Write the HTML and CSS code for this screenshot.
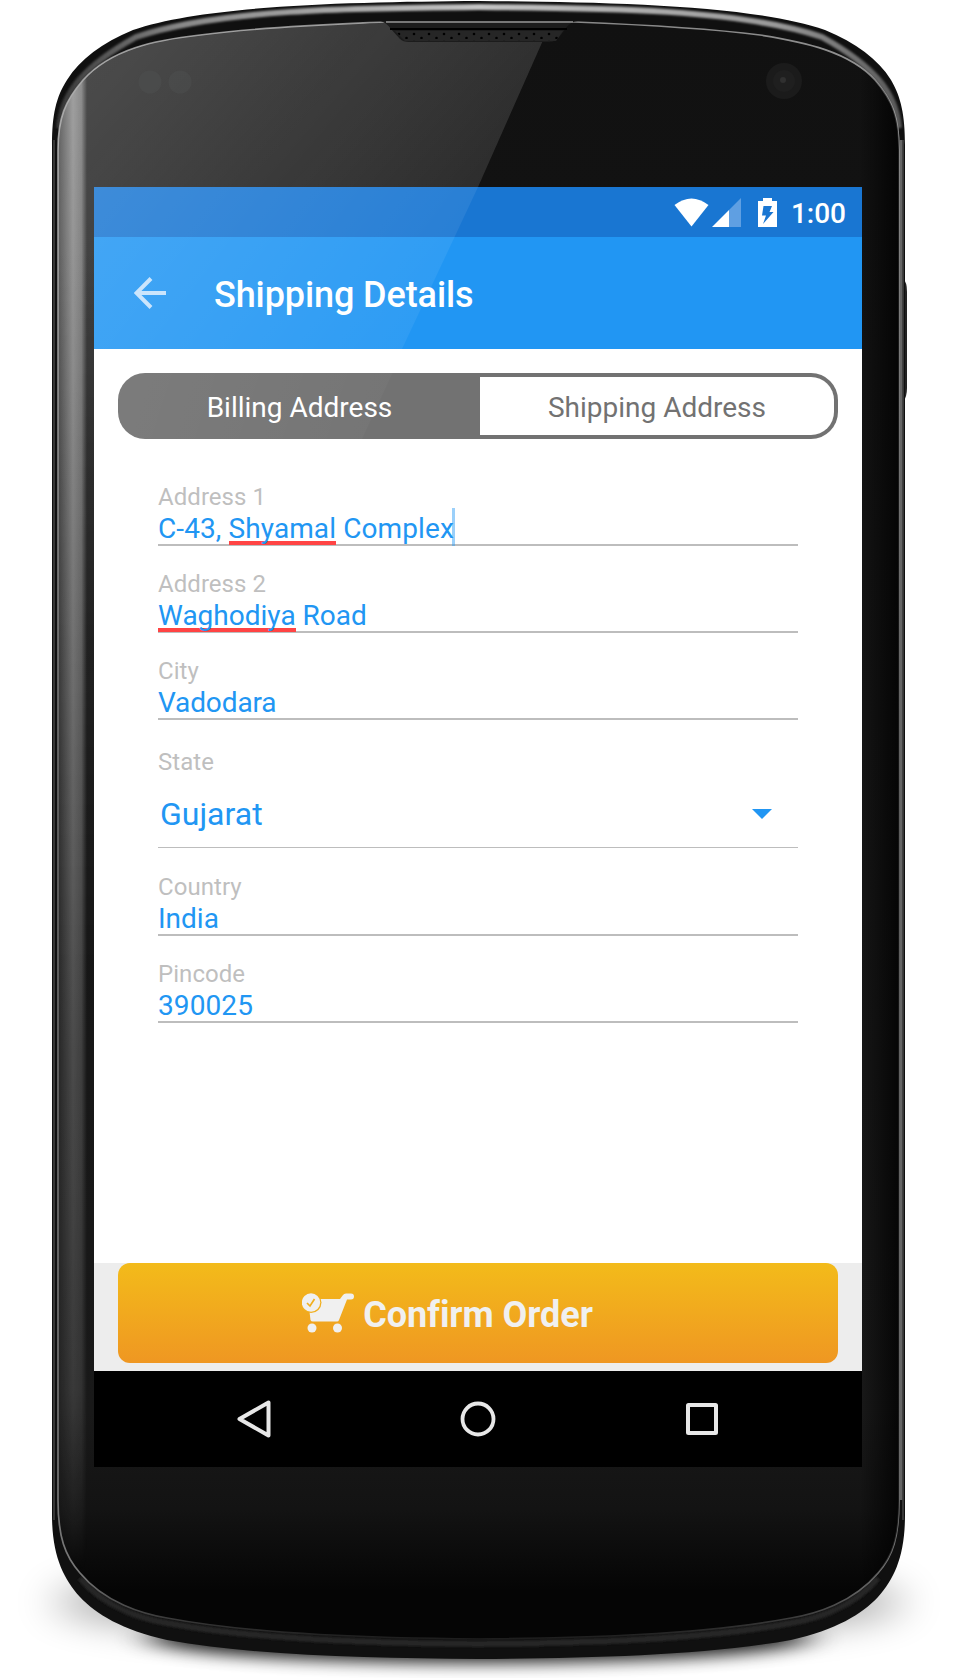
FILE: index.html
```html
<!DOCTYPE html>
<html lang="en">
<head>
<meta charset="utf-8">
<title>Shipping Details</title>
<link rel="stylesheet" href="styles.css">
</head>
<body>
<div class="device">
  <svg class="device-body" viewBox="0 0 958 1678" aria-hidden="true">
    <defs>
      <linearGradient id="face" x1="0" y1="0" x2="0" y2="1">
        <stop offset="0" stop-color="#111"/><stop offset=".86" stop-color="#191919"/><stop offset=".92" stop-color="#131313"/><stop offset=".97" stop-color="#050505"/>
      </linearGradient>
      <linearGradient id="gloss" gradientUnits="userSpaceOnUse" x1="90" y1="40" x2="430" y2="330">
        <stop offset="0" stop-color="#fff" stop-opacity=".25"/><stop offset="1" stop-color="#fff" stop-opacity=".1"/>
      </linearGradient>
      <linearGradient id="railX" x1="0" y1="0" x2="1" y2="0">
        <stop offset="0" stop-color="#aaa" stop-opacity=".3"/><stop offset=".5" stop-color="#aaa" stop-opacity=".9"/><stop offset=".8" stop-color="#aaa" stop-opacity=".7"/><stop offset="1" stop-color="#aaa" stop-opacity="0"/>
      </linearGradient>
      <linearGradient id="fadeY" gradientUnits="userSpaceOnUse" x1="0" y1="70" x2="0" y2="1570">
        <stop offset="0" stop-color="#fff"/><stop offset=".3" stop-color="#bbb"/><stop offset=".65" stop-color="#666"/><stop offset=".88" stop-color="#404040"/><stop offset="1" stop-color="#000"/>
      </linearGradient>
      <linearGradient id="glossFade" gradientUnits="userSpaceOnUse" x1="0" y1="250" x2="0" y2="1000">
        <stop offset="0" stop-color="#fff"/><stop offset="1" stop-color="#000"/>
      </linearGradient>
      <mask id="railMask"><rect width="958" height="1678" fill="url(#fadeY)"/></mask>
      <mask id="glossMask"><rect width="958" height="1678" fill="url(#glossFade)"/></mask>
      <linearGradient id="edge" gradientUnits="userSpaceOnUse" x1="52" y1="0" x2="905" y2="0">
        <stop offset="0" stop-color="#333"/><stop offset=".15" stop-color="#888"/><stop offset=".5" stop-color="#c4c4c4"/><stop offset=".85" stop-color="#999"/><stop offset="1" stop-color="#555"/>
      </linearGradient>
      <linearGradient id="rightShade" gradientUnits="userSpaceOnUse" x1="860" y1="0" x2="900" y2="0">
        <stop offset="0" stop-color="#000" stop-opacity="0"/><stop offset="1" stop-color="#000" stop-opacity=".8"/>
      </linearGradient>
      <linearGradient id="rim" gradientUnits="userSpaceOnUse" x1="0" y1="20" x2="0" y2="1640">
        <stop offset="0" stop-color="#888"/><stop offset=".05" stop-color="#999"/><stop offset=".5" stop-color="#666"/><stop offset=".96" stop-color="#777"/><stop offset="1" stop-color="#1c1c1c"/>
      </linearGradient>
      <pattern id="mesh" width="15" height="8" patternUnits="userSpaceOnUse" x="395" y="31">
        <circle cx="4" cy="3" r="1.3"/><circle cx="11.500" cy="7" r="1.3"/>
      </pattern>
      <filter id="soft" x="-20%" y="-100%" width="140%" height="300%"><feGaussianBlur stdDeviation="18 8"/></filter>
      <filter id="wide" x="-20%" y="-60%" width="140%" height="220%"><feGaussianBlur stdDeviation="22 18"/></filter>
      <filter id="blur2" filterUnits="userSpaceOnUse" x="0" y="0" width="958" height="1678"><feGaussianBlur stdDeviation="1.200"/></filter>
      <path id="bodyShape" d="M52 145C52 115 56 97 67 80C80 59 102 43 133 30C205 5 350 2 479 1C608 2 753 5 825 30C856 43 878 59 891 80C901 97 905 115 905 145V1515C905 1555 895 1578 878 1597C862 1614 836 1630 791 1640C700 1656 590 1658 479 1659C368 1658 258 1656 167 1640C122 1630 96 1614 80 1597C63 1578 52 1555 52 1515Z"/>
      <path id="faceShape" d="M58 150C58 118 65 101 83 80C111 49 155 40 200 35C270 26 340 24 383 22H575C625 24 705 28 760 35C805 42 850 52 875 80C893 101 899 118 899 150V1500C899 1537 893 1556 878 1573C853 1603 815 1614 791 1618C700 1635 580 1638 479 1639C378 1638 258 1635 167 1618C143 1614 105 1603 80 1573C65 1556 58 1537 58 1500Z"/>
      <clipPath id="bodyClip"><use href="#bodyShape"/></clipPath>
      <clipPath id="faceClip"><use href="#faceShape"/></clipPath>
    </defs>
    <ellipse cx="479" cy="1602" rx="425" ry="38" fill="#000" opacity=".34" filter="url(#wide)"/>
    <ellipse cx="479" cy="1638" rx="330" ry="25" fill="#000" opacity=".85" filter="url(#soft)"/>
    <path d="M903 278Q907 282 907 292V388Q907 397 903 402Z" fill="#222"/>
    <use href="#bodyShape" fill="#101010"/>
    <g clip-path="url(#bodyClip)">
      <path d="M59 128C62 94 82 67 136 37C220 9 350 8 479 7C608 8 738 9 822 37C876 67 896 94 899 128" fill="none" stroke="url(#edge)" stroke-width="6" filter="url(#blur2)"/>
      <path d="M54 140V1520M903 140V1520" fill="none" stroke="#444" stroke-width="1.500"/>
      <path d="M901 140V1500" stroke="#666" stroke-width="2.500"/>
      <path d="M80 1573C105 1603 143 1614 167 1618C258 1635 378 1638 479 1639C580 1638 700 1635 791 1618C815 1614 853 1603 878 1573" transform="translate(0 5)" fill="none" stroke="#262626" stroke-width="6" filter="url(#blur2)"/>
    </g>
    <use href="#faceShape" fill="url(#face)" stroke="url(#rim)" stroke-width="1.700"/>
    <g clip-path="url(#faceClip)">
      <path d="M56 20H552L478 187L170 860L56 1100Z" fill="url(#gloss)" mask="url(#glossMask)"/>
      <rect x="59" y="50" width="28" height="1530" fill="url(#railX)" mask="url(#railMask)"/>
      <rect x="860" y="60" width="40" height="1560" fill="url(#rightShade)"/>
    </g>
    <path d="M380 21Q386 22 391 29L400 39Q403 42 409 42H549Q556 42 560 36L566 28Q570 22 578 21Z" fill="#1c1c1c"/>
    <path d="M395 31H563L556 41H405Z" fill="#262626"/>
    <path d="M395 31H563L556 41H405Z" fill="url(#mesh)"/>
    <path d="M386 22H573" stroke="#777" stroke-width="2"/>
    <path d="M390 29H567" stroke="#000" stroke-width="2"/>
    <circle cx="150" cy="82" r="11.500" fill="#515353" opacity=".4"/><circle cx="180" cy="82" r="11.500" fill="#515353" opacity=".4"/>
    <circle cx="784" cy="81" r="18" fill="#1b1b1b"/><circle cx="784" cy="81" r="11" fill="#1f1f1f"/><circle cx="783" cy="80" r="3" fill="#303030"/>
  </svg>

  <main class="screen">
    <header class="status-bar">
      <svg class="icon-wifi" viewBox="0 0 35 29"><path d="M.5 7Q17.500-6 34.500 7L17.500 28.500Z" fill="#fff"/></svg>
      <svg class="icon-cell" viewBox="0 0 29 29"><path d="M29 0V29H17V12Z" fill="#5f9fe2"/><path d="M17 12V29H0Z" fill="#fff"/></svg>
      <svg class="icon-battery" viewBox="0 0 19 29"><path d="M5 0H14V3H19V29H0V3H5Z" fill="#fff"/><path d="M5.500 8H14L11.500 14H15.500L5 26L8 17.500H4Z" fill="#1976d2"/></svg>
      <span class="clock">1:00</span>
    </header>
    <div class="app-bar">
      <svg class="icon-back" viewBox="0 0 32 32"><path d="M32 16H3M17 1.500L2.500 16L17 30.500" fill="none" stroke="#c3e1fc" stroke-width="4"/></svg>
      <h1 class="title">Shipping Details</h1>
    </div>
    <div class="content">
      <nav class="tabs">
        <span class="tab tab-active">Billing Address</span>
        <span class="tab">Shipping Address</span>
      </nav>
      <form class="form">
        <div class="field"><span class="label">Address 1</span><span class="value value-long">C-43, <span class="typo">Shyamal</span> Complex<i class="caret"></i></span></div>
        <div class="field"><span class="label">Address 2</span><span class="value"><span class="typo">Waghodiya</span> Road</span></div>
        <div class="field"><span class="label">City</span><span class="value value-tight">Vadodara</span></div>
        <div class="select-field"><span class="label">State</span><div class="select"><span>Gujarat</span><i class="arrow"></i></div></div>
        <div class="field"><span class="label">Country</span><span class="value">India</span></div>
        <div class="field"><span class="label">Pincode</span><span class="value value-long">390025</span></div>
      </form>
    </div>
    <footer class="footer">
      <div class="confirm">
        <svg class="icon-cart" viewBox="0 0 52 40"><path d="M6 6H38L41 2Q42 .5 44 .5H49Q52 .5 52 3.500T49 6.500H45L37 27Q36.500 28.500 35 28.500H11Q9 28.500 8.500 27Z" fill="#f0f0f0"/><circle cx="9" cy="9.500" r="10.500" fill="#f1af1e"/><circle cx="9" cy="9.500" r="9.200" fill="#f0f0f0"/><path d="M5 10L8 13L12.500 6" fill="none" stroke="#f1af1e" stroke-width="1.700"/><circle cx="10" cy="35" r="4.500" fill="#f0f0f0"/><circle cx="35.500" cy="35" r="4.500" fill="#f0f0f0"/></svg>
        <span class="confirm-text">Confirm Order</span>
      </div>
    </footer>
    <div class="nav-bar">
      <svg viewBox="0 0 40 40"><path d="M34.500 3.500V36.500L5.500 20Z" fill="none" stroke="#e8e8e8" stroke-width="4" stroke-linejoin="round"/></svg>
      <svg viewBox="0 0 40 40"><circle cx="20" cy="20" r="15.500" fill="none" stroke="#e8e8e8" stroke-width="3.800"/></svg>
      <svg viewBox="0 0 40 40"><rect x="6" y="6" width="28" height="28" rx=".5" fill="none" stroke="#e8e8e8" stroke-width="4" stroke-linejoin="round"/></svg>
    </div>
    <svg class="glare" viewBox="0 0 768 1280" aria-hidden="true">
      <defs><linearGradient id="screenGlare" gradientUnits="userSpaceOnUse" x1="0" y1="0" x2="300" y2="230"><stop offset="0" stop-color="#fff" stop-opacity=".16"/><stop offset="1" stop-color="#fff" stop-opacity=".05"/></linearGradient>
      <linearGradient id="tabGlare" gradientUnits="userSpaceOnUse" x1="20" y1="180" x2="300" y2="270"><stop offset="0" stop-color="#fff" stop-opacity=".07"/><stop offset="1" stop-color="#fff" stop-opacity=".02"/></linearGradient></defs>
      <path d="M0 0H384L308 162H0Z" fill="url(#screenGlare)"/>
      <path d="M0 174H304L268 252H0Z" fill="url(#tabGlare)"/>
    </svg>
  </main>
</div>
</body>
</html>
```

FILE: styles.css
```css
* { box-sizing: border-box; }
body { margin: 0; background: #fff; font-family: Roboto, sans-serif; }
svg { display: block; flex: none; }
.device { position: relative; width: 958px; height: 1678px; padding: 187px 96px 0 94px; overflow: hidden; }
.device-body { position: absolute; inset: 0; width: 958px; height: 1678px; }
.screen { position: relative; display: flex; flex-direction: column; width: 768px; height: 1280px; background: #fff; }
.glare { position: absolute; inset: 0; width: 768px; height: 1280px; pointer-events: none; }

.status-bar { display: flex; align-items: center; justify-content: flex-end; height: 50px; padding-right: 16px; background: #1976d2; color: #fff; }
.icon-wifi { width: 35px; height: 29px; }
.icon-cell { width: 29px; height: 29px; margin-left: 3px; }
.icon-battery { width: 19px; height: 29px; margin-left: 17px; }
.clock { margin-left: 14px; padding-top: 3px; font-size: 28px; font-weight: 500; line-height: 34px; }

.app-bar { display: flex; align-items: center; height: 112px; padding-left: 40px; background: #2196f3; color: #fff; }
.icon-back { width: 32px; height: 32px; }
.title { margin: 4px 0 0 48px; font-size: 36px; font-weight: 500; line-height: 44px; letter-spacing: -.1px; }

.content { flex: 1; padding: 24px 24px 0; }
.tabs { display: flex; height: 66px; padding: 4px; border-radius: 27px; background: #727272; }
.tab { display: flex; flex: 1; align-items: center; justify-content: center; padding-top: 3px; font-size: 28px; }
.tab:last-child { flex: none; width: 354px; border-radius: 0 23px 23px 0; background: #fff; color: #727272; }
.tab-active { padding-right: 3px; color: #fff; }

.form { padding: 44px 40px 0; }
.field { height: 87px; }
.label { display: block; height: 28px; color: #bfbfbf; font-size: 24px; line-height: 28px; letter-spacing: .05px; }
.value { position: relative; display: block; height: 35px; border-bottom: 2px solid #bdbdbd; color: #2196f3; font-size: 28px; line-height: 36px; }
.value-long { letter-spacing: .1px; }
.value-tight { letter-spacing: -.12px; }
.typo { background: linear-gradient(#ff4444, #ff4444) left 0 bottom 0 / 100% 4px no-repeat; }
.caret { position: absolute; top: -3px; display: inline-block; width: 3px; height: 38px; margin-left: -2px; background: rgba(33, 150, 243, .45); }
.select-field { height: 129px; padding-top: 4px; }
.select { display: flex; align-items: center; justify-content: space-between; height: 72px; padding: 5px 26px 0 2px; border-bottom: 1px solid #bdbdbd; color: #2196f3; font-size: 32px; }
.arrow { border: 10px solid transparent; border-top-color: #2196f3; border-bottom: 0; }

.footer { height: 108px; padding: 0 24px 8px; background: #ededed; }
.confirm { display: flex; align-items: center; justify-content: center; gap: 9px; height: 100px; padding-right: 61px; border-radius: 12px; background: linear-gradient(#f3bb1a, #ef9722); color: #f0f0f0; font-size: 36px; font-weight: 700; }
.confirm-text { padding-top: 4px; letter-spacing: -.05px; }
.icon-cart { width: 52px; height: 40px; }
.nav-bar { display: flex; align-items: center; justify-content: space-between; height: 96px; padding: 0 140px; background: #000; }
.nav-bar svg { width: 40px; height: 40px; }
```
